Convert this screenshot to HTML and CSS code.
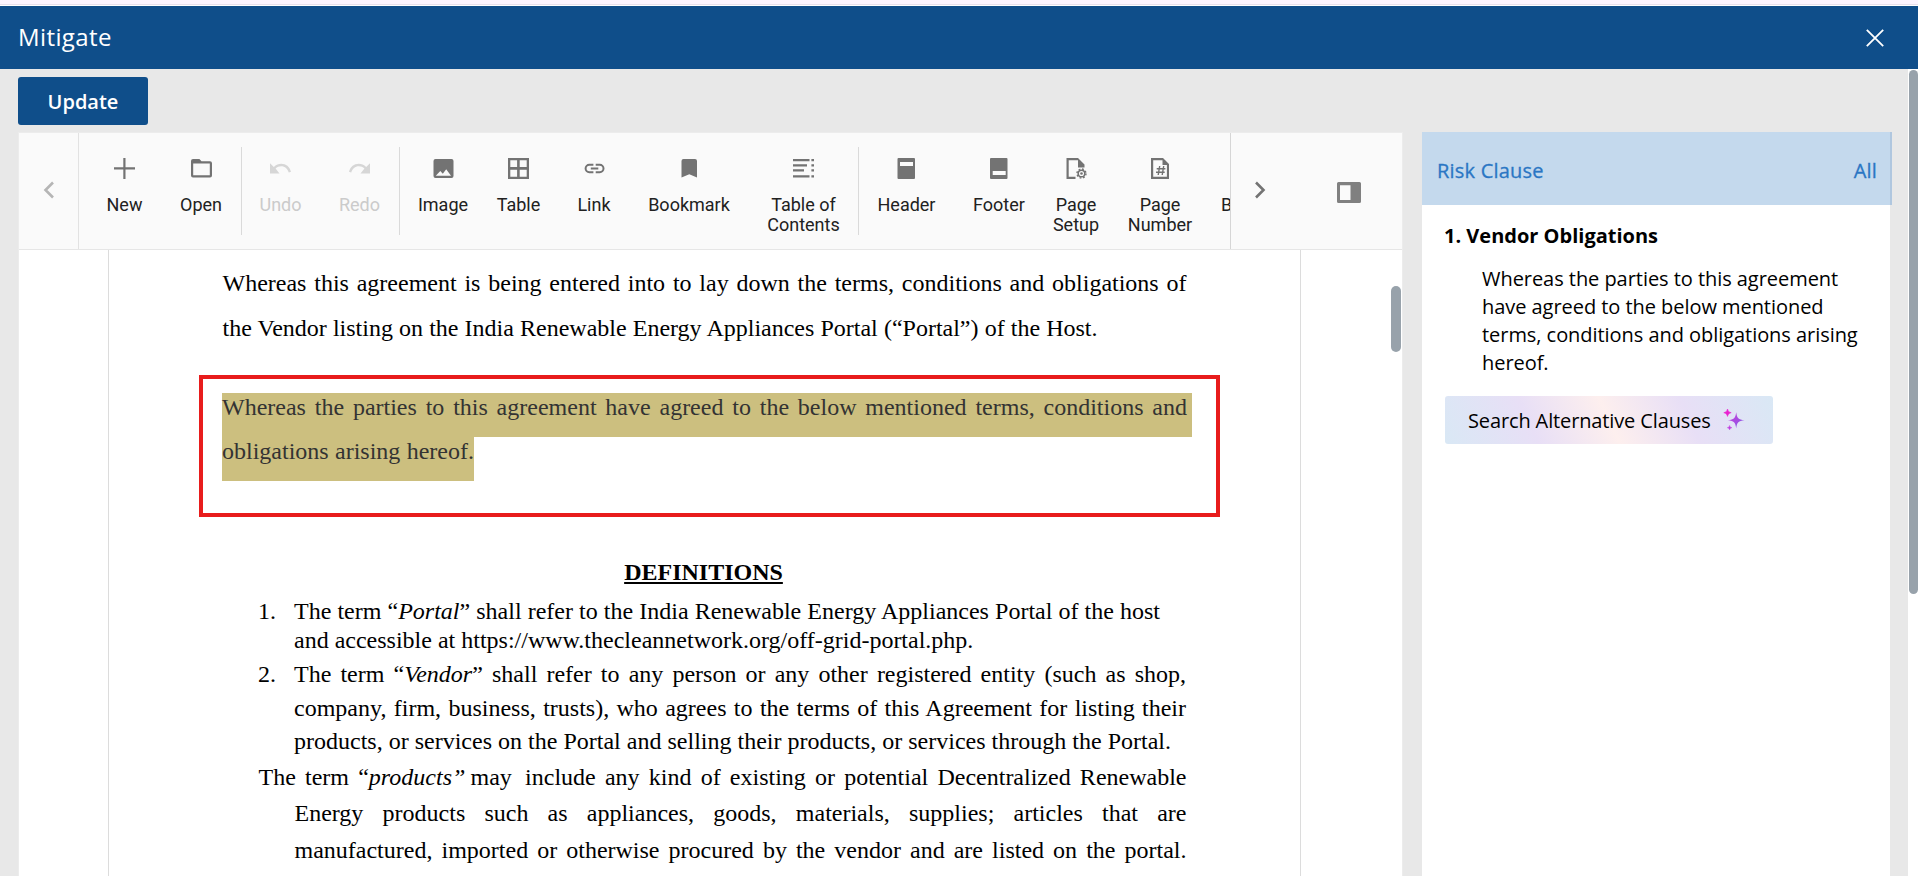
FILE: index.html
```html
<!DOCTYPE html>
<html lang="en">
<head>
<meta charset="utf-8">
<title>Mitigate</title>
<link rel="stylesheet" href="styles.css">
</head>
<body>
<header class="titlebar">
  <h1 class="title"><span>Mitigate</span></h1>
  <svg class="close" width="18" height="18" viewBox="0 0 18 18"><path d="M.8 .8 17.2 17.2M17.2 .8 .8 17.2"/></svg>
</header>
<div class="body">
  <div class="content">
    <button class="update"><span>Update</span></button>
    <div class="columns">
      <section class="editor">
        <div class="toolbar">
          <div class="nav nav-prev"><svg width="12" height="18" viewBox="0 0 12 18"><path d="M10 1.5 2.5 9 10 16.5"/></svg></div>
          <div class="items">
            <div class="item new"><svg width="21" height="21" viewBox="0 0 21 21"><path d="M9.3 0h2.2v9.2H21v2.2h-9.5V21H9.3v-9.6H0V9.2h9.3z"/></svg><span>New</span></div>
            <div class="item open"><svg width="21" height="21" viewBox="0 0 21 21"><path fill-rule="evenodd" d="M2 1h6.4l2.1 2.2H19a2 2 0 0 1 2 2V17.500a2 2 0 0 1-2 2H2a2 2 0 0 1-2-2V3a2 2 0 0 1 2-2zM2.200 5.500V17.300H18.800V5.500z"/></svg><span>Open</span></div>
            <div class="item undo split off"><svg width="21" height="21" viewBox="0 0 21 21"><path d="M0 5.200 3.800 9C6 6.800 8.600 5.800 11.300 5.800c4.600 0 8.400 3 9.700 7.900l-2.200.8c-1.100-3.700-3.900-6.300-7.600-6.300-2.100 0-4.200.8-5.600 2.300L9.500 15.500H0z"/></svg><span>Undo</span></div>
            <div class="item redo off"><svg width="21" height="21" viewBox="0 0 21 21"><path d="M21 5.200 17.200 9C15 6.800 12.400 5.800 9.700 5.800 5.100 5.800 1.300 8.800 0 13.700l2.200.8c1.100-3.700 3.900-6.300 7.600-6.300 2.100 0 4.200.8 5.600 2.300L11.500 15.500H21z"/></svg><span>Redo</span></div>
            <div class="item image split"><svg width="21" height="21" viewBox="0 0 21 21"><path fill-rule="evenodd" d="M2.500 1h16a2 2 0 0 1 2 2v15a2 2 0 0 1-2 2h-16a2 2 0 0 1-2-2V3a2 2 0 0 1 2-2zM2.800 17.800H18L13.200 11.200 9.800 15.700 7.300 13z"/></svg><span>Image</span></div>
            <div class="item table"><svg width="21" height="21" viewBox="0 0 21 21"><path fill-rule="evenodd" d="M0 0h21v21H0zM2.300 2.300v6.800h6.800V2.300zM11.700 2.300v6.800h7V2.300zM2.300 11.800v6.900h6.800v-6.900zM11.700 11.800v6.900h7v-6.900z"/></svg><span>Table</span></div>
            <div class="item link"><svg width="21" height="21" viewBox="0 0 21 21"><path d="M9.400 6.800H5.300a3.700 3.700 0 0 0 0 7.400h4.100M11.700 6.800h4.100a3.700 3.700 0 0 1 0 7.400h-4.100M6.800 10.500h7.500" fill="none" stroke="#737373" stroke-width="2"/></svg><span>Link</span></div>
            <div class="item bookmark"><svg width="21" height="21" viewBox="0 0 21 21"><path d="M4.500 1h11.500a2 2 0 0 1 2 2V19.500L10.300 16.200 2.500 19.500V3a2 2 0 0 1 2-2z"/></svg><span>Bookmark</span></div>
            <div class="item toc"><svg width="21" height="21" viewBox="0 0 21 21"><path d="M0 1h16.500v2.200H0zM0 6.200h14v2.200H0zM0 11.300h11v2.200H0zM0 17.300h16.500v2.200H0zM18.400 1H21v2.200h-2.600zM18.400 6.200H21v2.200h-2.600zM18.400 11.300H21v2.200h-2.600zM18.400 17.300H21v2.200h-2.600z"/></svg><span>Table of<br>Contents</span></div>
            <div class="item header split"><svg width="21" height="21" viewBox="0 0 21 21"><path fill-rule="evenodd" d="M2.500 0h15.500a1 1 0 0 1 1 1v19a1 1 0 0 1-1 1H2.500a1 1 0 0 1-1-1V1a1 1 0 0 1 1-1zM4 4v4h13V4z"/></svg><span>Header</span></div>
            <div class="item footer"><svg width="21" height="21" viewBox="0 0 21 21"><path fill-rule="evenodd" d="M2 0h15.500a1 1 0 0 1 1 1v19a1 1 0 0 1-1 1H2a1 1 0 0 1-1-1V1a1 1 0 0 1 1-1zM3.700 13v4h13V13z"/></svg><span>Footer</span></div>
            <div class="item setup"><svg width="21" height="21" viewBox="0 0 21 21"><path fill-rule="evenodd" d="M.5 0H12l6.500 6.500V9.500H12V2.300H2.700V18.700H9.500V21H.5z"/><circle cx="15.500" cy="15.500" r="3.300" fill="none" stroke="#737373" stroke-width="1.500"/><circle cx="15.500" cy="15.500" r="1.300"/><circle cx="15.500" cy="15.500" r="4.500" fill="none" stroke="#737373" stroke-width="1.400" stroke-dasharray="1.800 1.734"/></svg><span>Page<br>Setup</span></div>
            <div class="item number"><svg width="21" height="21" viewBox="0 0 21 21"><path fill-rule="evenodd" d="M1 0H13l6 6V21H1zM3.200 2.300V18.700H16.900V7H12.500V2.300z"/><path d="M9.700 8 8.200 17M13.700 8 12.200 17M6.700 10.700H15.400M6 14.200h8.700" fill="none" stroke="#737373" stroke-width="1.400"/></svg><span>Page<br>Number</span></div>
            <div class="item break"><span>Break</span></div>
          </div>
          <div class="nav nav-next"><svg width="12" height="18" viewBox="0 0 12 18"><path d="M2 1.500 9.500 9 2 16.500"/></svg></div>
          <div class="pane-toggle"><svg width="24" height="21" viewBox="0 0 24 21"><path fill-rule="evenodd" d="M1.500 0h21A1.500 1.500 0 0 1 24 1.500v18a1.500 1.500 0 0 1-1.500 1.500h-21A1.500 1.500 0 0 1 0 19.500v-18A1.500 1.500 0 0 1 1.500 0zM3 3.200V18H13.500V3.200z"/></svg></div>
        </div>
        <div class="canvas">
          <article class="page">
            <p class="intro"><span class="full">Whereas this agreement is being entered into to lay down the terms, conditions and obligations of</span><span class="line-host">the Vendor listing on the India Renewable Energy Appliances Portal (“Portal”) of the Host.</span></p>
            <div class="callout">
              <p class="marked"><span class="mark mark-a">Whereas the parties to this agreement have agreed to the below mentioned terms, conditions and</span><span class="mark mark-b">obligations arising hereof.</span></p>
            </div>
            <h2 class="heading"><span>DEFINITIONS</span></h2>
            <div class="term term-portal"><b class="num">1.</b><p><span class="l1">The term “<i>Portal</i>” shall refer to the India Renewable Energy Appliances Portal of the host</span><span class="l2">and accessible at https://www.thecleannetwork.org/off-grid-portal.php.</span></p></div>
            <div class="term term-vendor"><b class="num">2.</b><p><span>The term “<i>Vendor</i>” shall refer to any person or any other registered entity (such as shop,</span><span>company, firm, business, trusts), who agrees to the terms of this Agreement for listing their</span><span class="l3">products, or services on the Portal and selling their products, or services through the Portal.</span></p></div>
            <p class="products"><span class="first">The term “<i class="tight">products” </i><span class="wide">may </span>include any kind of existing or potential Decentralized Renewable</span><span>Energy products such as appliances, goods, materials, supplies; articles that are</span><span>manufactured, imported or otherwise procured by the vendor and are listed on the portal.</span></p>
          </article>
          <div class="thumb"></div>
        </div>
      </section>
      <aside class="risk">
        <div class="risk-head"><span class="rc">Risk Clause</span><span class="all">All</span></div>
        <h3 class="clause-title"><span>1. Vendor Obligations</span></h3>
        <p class="clause"><span>Whereas the parties to this agreement</span><br><span>have agreed to the below mentioned</span><br><span>terms, conditions and obligations arising</span><br><span>hereof.</span></p>
        <button class="search"><span>Search Alternative Clauses</span><svg width="22" height="22" viewBox="0 0 22 22"><defs><linearGradient id="spark" x1="0" y1="0" x2="1" y2="1"><stop offset="0" stop-color="#c93fe0"/><stop offset=".5" stop-color="#a94be0"/><stop offset="1" stop-color="#7a62f0"/></linearGradient></defs><path fill="url(#spark)" d="M13.200 3.300C14 9.200 15.400 10.600 21.500 11.300 15.400 12 14 13.400 13.200 19.300 12.400 13.400 11 12 4.900 11.300 11 10.600 12.400 9.200 13.200 3.300z"/><path fill="#e922cf" stroke="#e922cf" stroke-width=".6" d="M4.500 0c.6 2.300 1.300 3 3.700 3.700-2.400.7-3.100 1.400-3.700 3.700C3.900 5.100 3.200 4.400.8 3.700 3.200 3 3.900 2.300 4.500 0z"/><path fill="#c03de0" stroke="#c03de0" stroke-width=".4" d="M6.600 16.400c.4 1.500.8 1.900 2.400 2.300-1.600.4-2 .8-2.400 2.300-.4-1.500-.8-1.900-2.400-2.300 1.600-.4 2-.8 2.400-2.300z"/></svg></button>
      </aside>
    </div>
  </div>
  <div class="scroll"><div class="scroll-thumb"></div></div>
</div>
</body>
</html>
```
FILE: styles.css
```css
* { box-sizing: border-box; }
body { margin: 0; height: 876px; overflow: hidden; display: flex; flex-direction: column; background: #fff; font-family: "Open Sans", "Noto Sans", sans-serif; border-top: 4px solid #fcf5ff; }
h1, h2, h3, p { margin: 0; font-weight: 400; }
button { border: 0; padding: 0; font-family: inherit; text-align: left; }
.titlebar { flex: none; margin-top: 2px; height: 63px; background: #0f4e8a; color: #fff; display: flex; align-items: center; justify-content: space-between; padding: 0 34.500px 1px 18px; box-shadow: 0 -1px #fff, 0 -2px #e8e0ec; }
.title { font-size: 24px; line-height: 32px; letter-spacing: .4px; }
.close { fill: none; stroke: #fff; stroke-width: 1.8; margin-top: 2px; }
.body { flex: 1; min-height: 0; display: flex; }
.content { flex: 1; background: #e8e8e8; padding: 8px 18px 0 18px; display: flex; flex-direction: column; }
.update { flex: none; width: 130px; height: 48px; border-radius: 3px; background: #0f4e8a; color: #fff; font-size: 20px; font-weight: 600; text-align: center; }
.columns { flex: 1; min-height: 0; margin-top: 7px; display: flex; gap: 19px; }
.editor { width: 1385px; border: 1px solid #ececec; border-bottom: 0; background: #fff; display: flex; flex-direction: column; }
.toolbar { flex: none; height: 117px; background: #fafafa; border-bottom: 1px solid #e6e6e6; display: flex; }
.nav { width: 60px; display: flex; align-items: center; justify-content: center; padding: 0 0 2px 0; }
.nav svg { fill: none; stroke-width: 2.6; }
.nav-prev { border-right: 1px solid #e2e2e2; stroke: #b5b5b5; }
.nav-next { border-left: 1px solid #d6d6d6; stroke: #737373; padding-right: 2px; }
.pane-toggle { flex: 1; display: flex; align-items: center; justify-content: center; padding: 2px 0 0 6px; fill: #808080; }
.items { width: 1151px; overflow: hidden; display: flex; padding: 14px 0; }
.item { flex: none; display: flex; flex-direction: column; align-items: center; gap: 16px; padding-top: 11px; height: 88px; font: 18px/20px Roboto, sans-serif; color: #212121; fill: #737373; text-align: center; }
.item span { white-space: nowrap; }
.split { border-left: 1px solid #dadada; }
.off { color: #cbcbcb; fill: #d6d6d6; }
.new { width: 91px; }
.open { width: 71px; padding-right: 9px; }
.undo, .redo { width: 79px; }
.undo { padding-right: 1px; }
.image { width: 88px; padding-right: 1px; }
.table { width: 63px; }
.link { width: 88px; }
.bookmark { width: 102px; }
.toc { width: 118px; padding-left: 9px; }
.header { width: 97px; padding-right: 1px; }
.footer { width: 88px; }
.setup { width: 66px; }
.number { width: 102px; }
.break { padding: 48px 0 0 10px; }
.canvas { flex: 1; min-height: 0; overflow: hidden; display: flex; justify-content: space-between; padding-left: 89px; }
.page { width: 1193px; border: solid #dcdcdc; border-width: 0 1px; font-family: "Liberation Serif", serif; font-size: 24px; color: #000; padding-left: 113.500px; }
.page p > span { display: block; white-space: nowrap; text-align-last: justify; }
.intro { padding-top: 11px; line-height: 45px; width: 964px; }
.intro .line-host { width: 875px; }
.callout { margin: 24px 0 0 -23.500px; width: 1021px; height: 142px; border: 4px solid #e81c1c; padding: 14px 0 0 19px; }
.marked { line-height: 44px; color: #333; }
.page p > .mark { background: #ccbf7f; height: 44px; line-height: 28px; }
.mark-a { width: 970px; padding-right: 5px; }
.mark-b { width: 252px; }
.heading { margin-top: 42px; width: 962px; line-height: 27px; font-size: 24px; font-weight: 700; text-align: center; text-decoration: underline; }
.term { display: flex; padding-left: 35.500px; }
.num { width: 36px; font-weight: 400; }
.term p { width: 892px; }
.term-portal { line-height: 29px; margin-top: 11px; }
.term-portal .l1 { width: 866px; }
.term-portal .l2 { width: 679px; }
.term-vendor { line-height: 33.500px; margin-top: 3px; }
.term-vendor .l3 { width: 877px; }
.products { line-height: 36.500px; width: 964px; padding-left: 72px; }
.products .first { margin-left: -36px; }
.tight { word-spacing: -4px; }
.wide { word-spacing: 4px; }
.thumb { width: 10px; height: 66px; margin-top: 36px; border-radius: 5px; background: #98a2ab; margin-right: 1px; }
.risk { width: 468px; background: #fff; color: #000; font-size: 20px; }
.risk-head { width: 470px; height: 73px; background: #c4d9ed; border-right: 2px solid #b0c7df; display: flex; justify-content: space-between; align-items: center; padding: 3px 13px 0 15px; color: #2a76c4; -webkit-text-stroke: .3px #2a76c4; letter-spacing: .2px; }
.clause-title { margin: 17px 0 0 22px; font-size: 20px; line-height: 28px; font-weight: 700; }
.clause { margin: 15px 0 0 60px; line-height: 28px; white-space: nowrap; letter-spacing: -.05px; }
.search { margin: 19px 0 0 23px; width: 328px; height: 48px; border-radius: 3px; padding: 1px 23px 0; display: flex; align-items: center; gap: 12px; font-size: 20px; letter-spacing: -.13px; color: #000; white-space: nowrap; background: linear-gradient(65deg, #d9e8f5 0%, #e8dff6 27%, #fdefee 50%, #e8dff6 73%, #d9e8f5 100%); }
.search svg { margin-bottom: 2px; }
.scroll { width: 10px; background: #fff; padding: 1px 0 0 1px; }
.scroll-thumb { width: 9px; height: 524px; border-radius: 5px; background: #98a2ab; }
```
